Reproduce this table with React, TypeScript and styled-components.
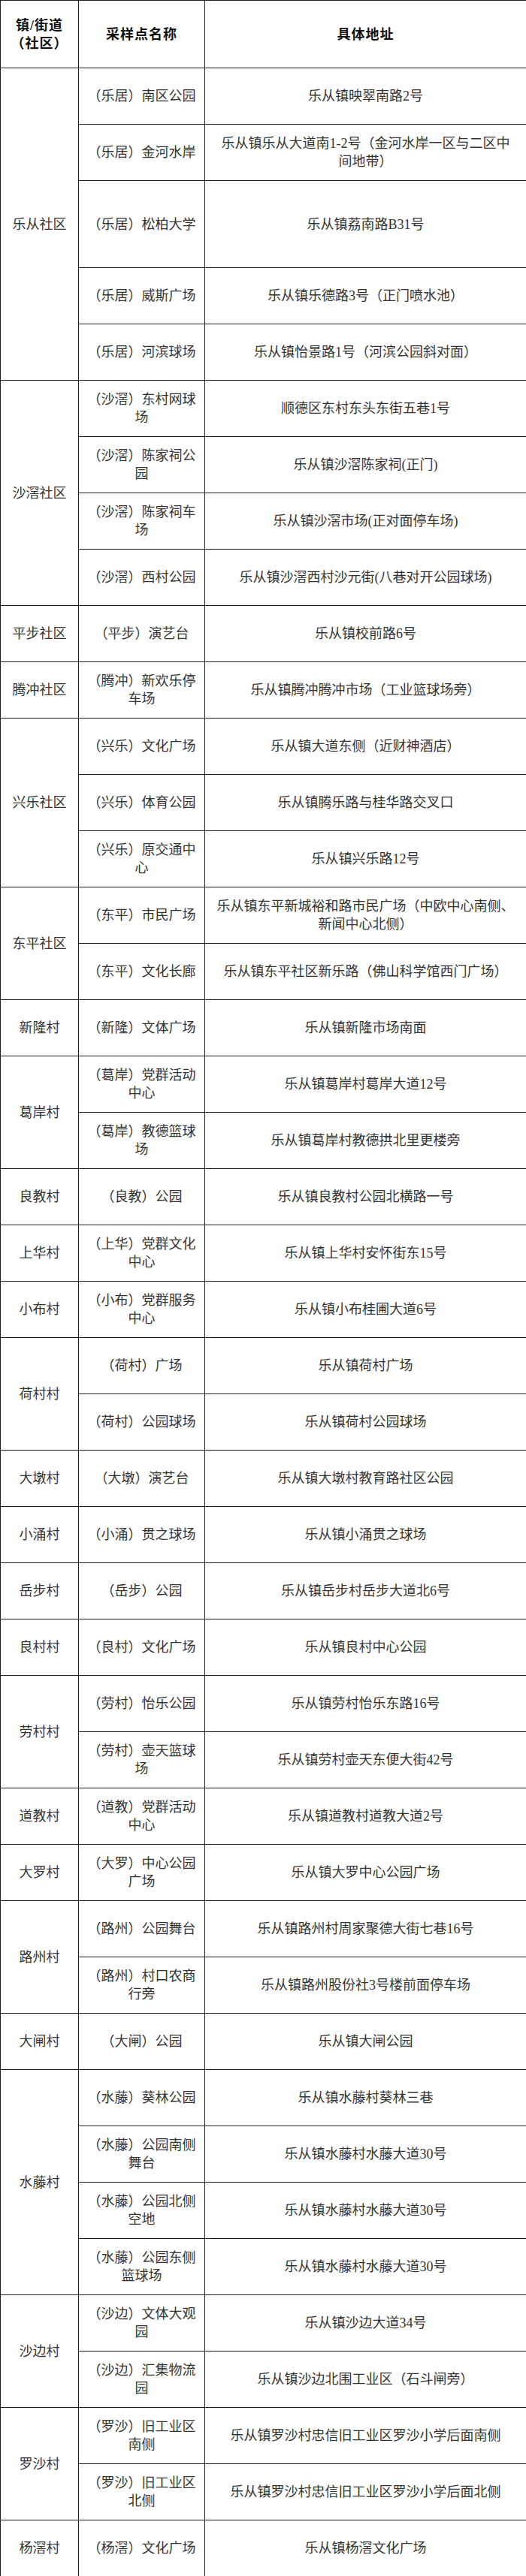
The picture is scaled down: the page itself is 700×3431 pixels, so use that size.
import React from "react";
import styled, { createGlobalStyle } from "styled-components";

type Site = { name: string; address: string; tall?: boolean };
type Group = { area: string; sites: Site[] };

const s = (name: string, address: string, tall?: boolean): Site => ({ name, address, tall });

const groups: Group[] = [
  {
    area: "乐从社区",
    sites: [
      s("（乐居）南区公园", "乐从镇映翠南路2号"),
      s("（乐居）金河水岸", "乐从镇乐从大道南1-2号（金河水岸一区与二区中\n间地带）"),
      s("（乐居）松柏大学", "乐从镇荔南路B31号", true),
      s("（乐居）威斯广场", "乐从镇乐德路3号（正门喷水池）"),
      s("（乐居）河滨球场", "乐从镇怡景路1号（河滨公园斜对面）"),
    ],
  },
  {
    area: "沙滘社区",
    sites: [
      s("（沙滘）东村网球\n场", "顺德区东村东头东街五巷1号"),
      s("（沙滘）陈家祠公\n园", "乐从镇沙滘陈家祠(正门)"),
      s("（沙滘）陈家祠车\n场", "乐从镇沙滘市场(正对面停车场)"),
      s("（沙滘）西村公园", "乐从镇沙滘西村沙元街(八巷对开公园球场)"),
    ],
  },
  { area: "平步社区", sites: [s("（平步）演艺台", "乐从镇校前路6号")] },
  { area: "腾冲社区", sites: [s("（腾冲）新欢乐停\n车场", "乐从镇腾冲腾冲市场（工业篮球场旁）")] },
  {
    area: "兴乐社区",
    sites: [
      s("（兴乐）文化广场", "乐从镇大道东侧（近财神酒店）"),
      s("（兴乐）体育公园", "乐从镇腾乐路与桂华路交叉口"),
      s("（兴乐）原交通中\n心", "乐从镇兴乐路12号"),
    ],
  },
  {
    area: "东平社区",
    sites: [
      s("（东平）市民广场", "乐从镇东平新城裕和路市民广场（中欧中心南侧、\n新闻中心北侧）"),
      s("（东平）文化长廊", "乐从镇东平社区新乐路（佛山科学馆西门广场）"),
    ],
  },
  { area: "新隆村", sites: [s("（新隆）文体广场", "乐从镇新隆市场南面")] },
  {
    area: "葛岸村",
    sites: [
      s("（葛岸）党群活动\n中心", "乐从镇葛岸村葛岸大道12号"),
      s("（葛岸）教德篮球\n场", "乐从镇葛岸村教德拱北里更楼旁"),
    ],
  },
  { area: "良教村", sites: [s("（良教）公园", "乐从镇良教村公园北横路一号")] },
  { area: "上华村", sites: [s("（上华）党群文化\n中心", "乐从镇上华村安怀街东15号")] },
  { area: "小布村", sites: [s("（小布）党群服务\n中心", "乐从镇小布桂圃大道6号")] },
  {
    area: "荷村村",
    sites: [s("（荷村）广场", "乐从镇荷村广场"), s("（荷村）公园球场", "乐从镇荷村公园球场")],
  },
  { area: "大墩村", sites: [s("（大墩）演艺台", "乐从镇大墩村教育路社区公园")] },
  { area: "小涌村", sites: [s("（小涌）贯之球场", "乐从镇小涌贯之球场")] },
  { area: "岳步村", sites: [s("（岳步）公园", "乐从镇岳步村岳步大道北6号")] },
  { area: "良村村", sites: [s("（良村）文化广场", "乐从镇良村中心公园")] },
  {
    area: "劳村村",
    sites: [
      s("（劳村）怡乐公园", "乐从镇劳村怡乐东路16号"),
      s("（劳村）壶天篮球\n场", "乐从镇劳村壶天东便大街42号"),
    ],
  },
  { area: "道教村", sites: [s("（道教）党群活动\n中心", "乐从镇道教村道教大道2号")] },
  { area: "大罗村", sites: [s("（大罗）中心公园\n广场", "乐从镇大罗中心公园广场")] },
  {
    area: "路州村",
    sites: [
      s("（路州）公园舞台", "乐从镇路州村周家聚德大街七巷16号"),
      s("（路州）村口农商\n行旁", "乐从镇路州股份社3号楼前面停车场"),
    ],
  },
  { area: "大闸村", sites: [s("（大闸）公园", "乐从镇大闸公园")] },
  {
    area: "水藤村",
    sites: [
      s("（水藤）葵林公园", "乐从镇水藤村葵林三巷"),
      s("（水藤）公园南侧\n舞台", "乐从镇水藤村水藤大道30号"),
      s("（水藤）公园北侧\n空地", "乐从镇水藤村水藤大道30号"),
      s("（水藤）公园东侧\n篮球场", "乐从镇水藤村水藤大道30号"),
    ],
  },
  {
    area: "沙边村",
    sites: [
      s("（沙边）文体大观\n园", "乐从镇沙边大道34号"),
      s("（沙边）汇集物流\n园", "乐从镇沙边北围工业区（石斗闸旁）"),
    ],
  },
  {
    area: "罗沙村",
    sites: [
      s("（罗沙）旧工业区\n南侧", "乐从镇罗沙村忠信旧工业区罗沙小学后面南侧"),
      s("（罗沙）旧工业区\n北侧", "乐从镇罗沙村忠信旧工业区罗沙小学后面北侧"),
    ],
  },
  { area: "杨滘村", sites: [s("（杨滘）文化广场", "乐从镇杨滘文化广场")] },
];

const App = () => {
  return (
    <>
      <GlobalStyle />
      <Table>
        <colgroup>
          <Col $w={104} />
          <Col $w={168} />
          <Col $w={428} />
        </colgroup>
        <thead>
          <Row $h={90}>
            <HeadCell>{"镇/街道\n（社区）"}</HeadCell>
            <HeadCell>采样点名称</HeadCell>
            <HeadCell>具体地址</HeadCell>
          </Row>
        </thead>
        <tbody>
          {groups.map((g) =>
            g.sites.map((site, i) => (
              <Row $h={site.tall ? 116 : 75} key={g.area + i}>
                {i === 0 && (
                  <Cell $pad={4} rowSpan={g.sites.length}>
                    {g.area}
                  </Cell>
                )}
                <Cell $pad={4}>{site.name}</Cell>
                <Cell $pad={6}>{site.address}</Cell>
              </Row>
            ))
          )}
        </tbody>
      </Table>
    </>
  );
};

const GlobalStyle = createGlobalStyle`
  html, body {
    margin: 0;
    padding: 0;
    background: #fff;
  }
  body {
    font-family: "Liberation Serif", "Noto Sans CJK SC", serif;
  }
`;

const Table = styled.table`
  width: 700px;
  table-layout: fixed;
  border-collapse: collapse;
`;

const Col = styled.col<{ $w: number }>`
  width: ${(p) => p.$w}px;
`;

const Row = styled.tr<{ $h: number }>`
  height: ${(p) => p.$h}px;
`;

const HeadCell = styled.th`
  border: 1px solid #1e1e1e;
  padding: 0 4px;
  text-align: center;
  vertical-align: middle;
  white-space: pre-line;
  font-size: 18px;
  line-height: 24px;
  font-weight: 700;
  letter-spacing: 1px;
  color: #111;
`;

const Cell = styled.td<{ $pad: number }>`
  border: 1px solid #1e1e1e;
  padding: 0 ${(p) => p.$pad}px;
  text-align: center;
  vertical-align: middle;
  white-space: pre-line;
  font-size: 18px;
  line-height: 24px;
  color: #333;
`;

export default App;
